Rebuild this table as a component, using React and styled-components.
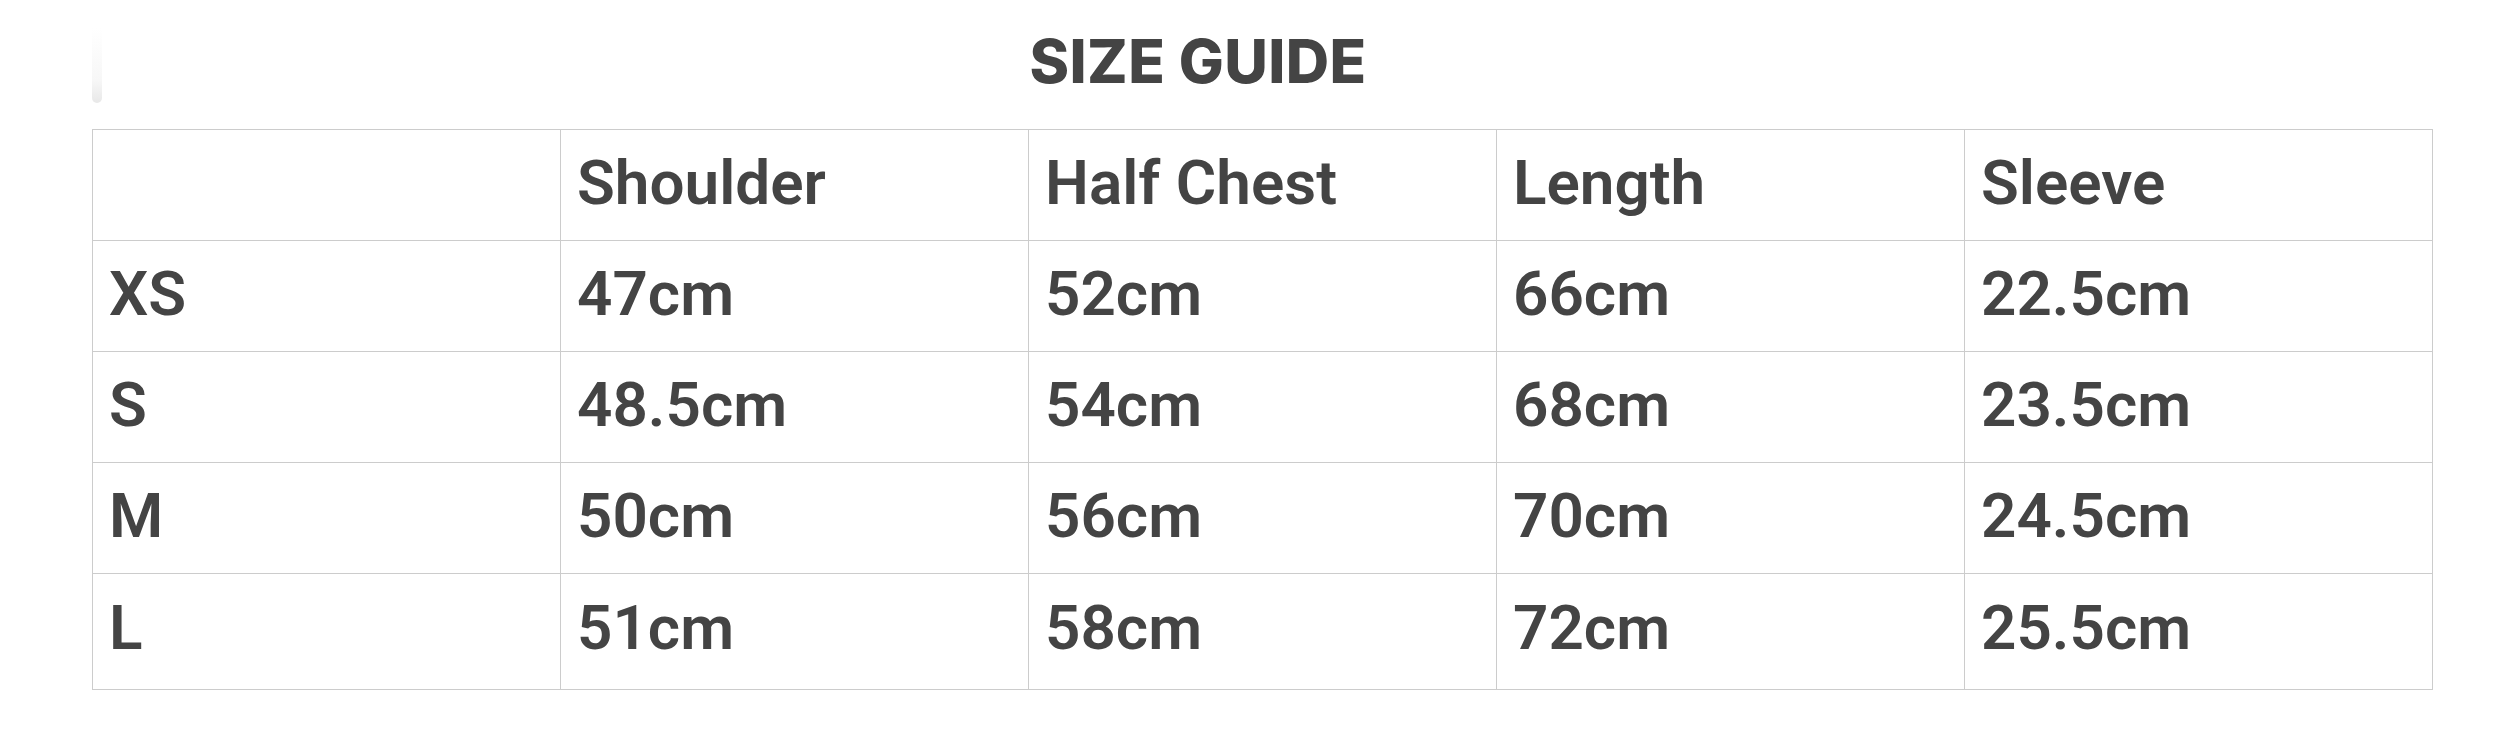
import styled, { createGlobalStyle } from 'styled-components'

const GlobalStyle = createGlobalStyle`
    body {
        margin: 0;
        background: #ffffff;
    }
`

const headers = ['', 'Shoulder', 'Half Chest', 'Length', 'Sleeve']

const sizes = [
    ['XS', '47cm', '52cm', '66cm', '22.5cm'],
    ['S', '48.5cm', '54cm', '68cm', '23.5cm'],
    ['M', '50cm', '56cm', '70cm', '24.5cm'],
    ['L', '51cm', '58cm', '72cm', '25.5cm'],
]

const SizeGuide = () => {
    return (
        <Page>
            <GlobalStyle />
            <ScrollHint />
            <Title>SIZE GUIDE</Title>
            <Table>
                <tbody>
                    <Row>
                        {headers.map((item, key) => (
                            <Cell key={key}>{item}</Cell>
                        ))}
                    </Row>
                    {sizes.map((row, key) => (
                        <Row key={key} $last={key === sizes.length - 1}>
                            {row.map((value, i) => (
                                <Cell key={i}>{value}</Cell>
                            ))}
                        </Row>
                    ))}
                </tbody>
            </Table>
        </Page>
    )
}

const Page = styled.div`
    position: relative;
    padding: 30px 0 40px 92px;
    color: #444444;
`

const ScrollHint = styled.div`
    position: absolute;
    left: 92px;
    top: 28px;
    width: 10px;
    height: 75px;
    border-radius: 0 0 6px 6px;
    background: linear-gradient(#ffffff, #f7f7f7 70%, #e8e8e8);
`

const Title = styled.h1`
    box-sizing: border-box;
    width: 2340px;
    margin: 0 0 37px 0;
    padding-right: 128px;
    text-align: center;
    font-family: Inter, 'Liberation Sans', sans-serif;
    font-size: 60px;
    font-weight: 800;
    line-height: 62px;
    letter-spacing: 0.4px;
    color: #444444;
`

const Table = styled.table`
    width: 2341px;
    border-collapse: collapse;
    table-layout: fixed;
`

const Row = styled.tr`
    height: ${(props) => (props.$last ? '116px' : '111px')};

    td {
        padding-bottom: ${(props) => (props.$last ? '8px' : '5px')};
    }
`

const Cell = styled.td`
    border: 1px solid #cccccc;
    padding: 0 16px;
    vertical-align: middle;
    font-family: Roboto, 'Liberation Sans', sans-serif;
    font-size: 62px;
    font-weight: 600;
    line-height: 62px;
    color: #444444;
    white-space: nowrap;
`

export default SizeGuide
